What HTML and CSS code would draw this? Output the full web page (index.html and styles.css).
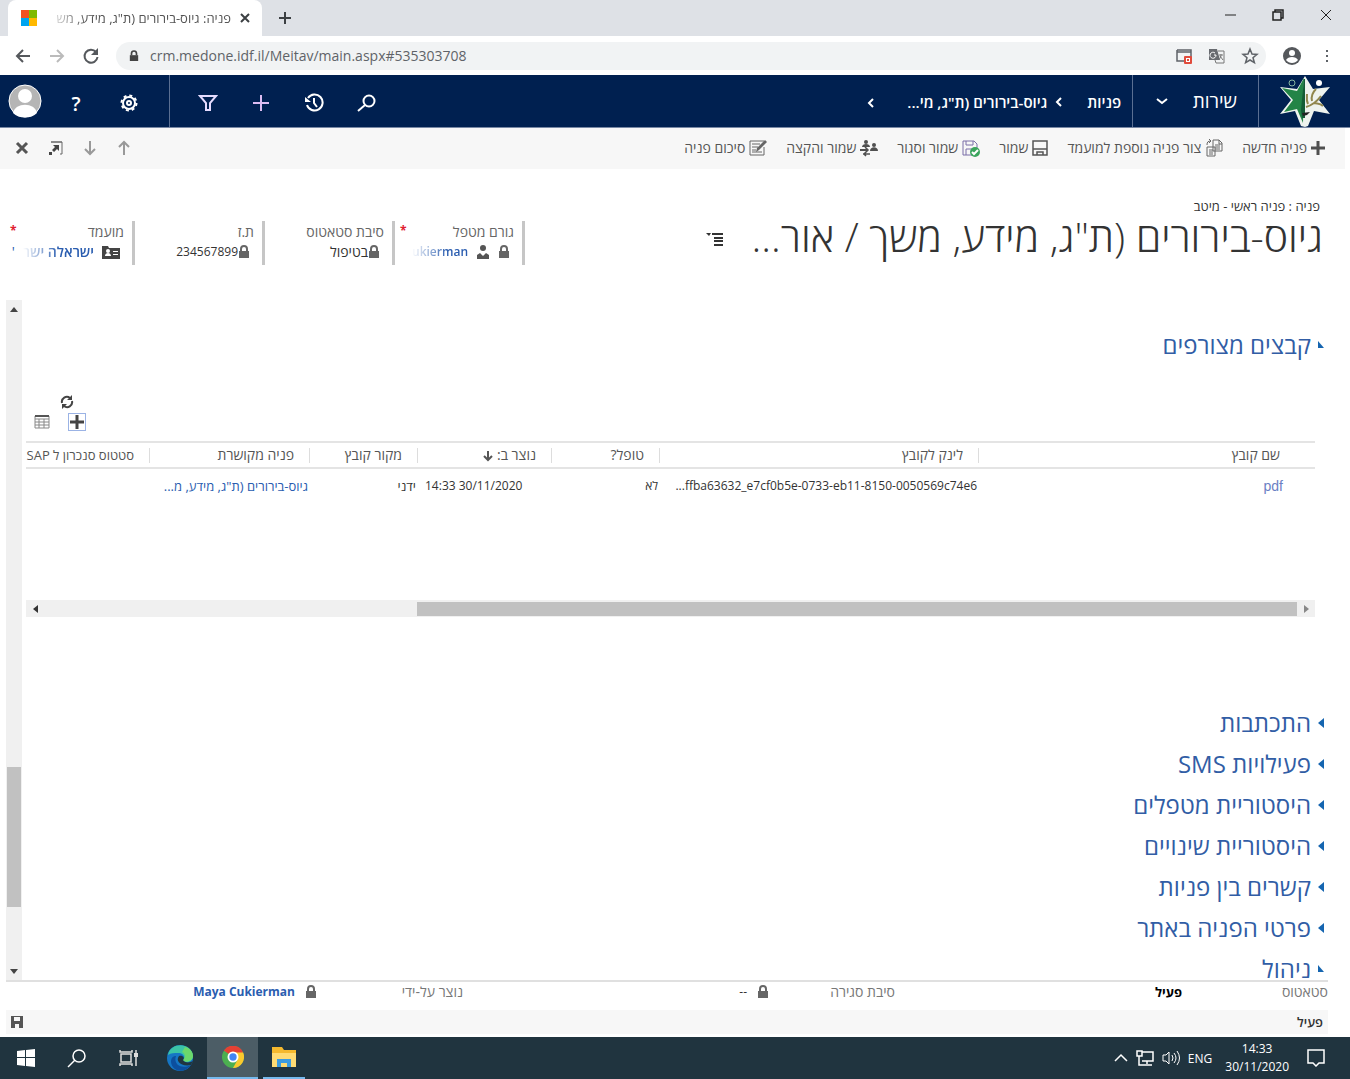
FILE: index.html
```html
<!DOCTYPE html>
<html lang="he">
<head>
<meta charset="utf-8">
<title>פניה: גיוס-בירורים</title>
<link rel="stylesheet" href="styles.css">
</head>
<body>
<svg class="defs" aria-hidden="true">
  <symbol id="lock" viewBox="0 0 12 14"><path d="M3 6V4a3 3 0 0 1 6 0v2" fill="none" stroke="currentColor" stroke-width="2"/><rect x="1" y="6" width="10" height="7" fill="currentColor"/></symbol>
  <symbol id="tri-left" viewBox="0 0 6 10"><path d="M6 0v10L0 5z" fill="currentColor"/></symbol>
  <symbol id="tri-open" viewBox="0 0 6 10"><path d="M0 1v7h6z" fill="currentColor"/></symbol>
  <symbol id="chev" viewBox="0 0 8 12"><path d="M6 2L2 6l4 4" fill="none" stroke="currentColor" stroke-width="2"/></symbol>
</svg>
<div class="window">
  <header class="tabstrip">
    <div class="tab">
      <svg class="i18" viewBox="0 0 18 18"><path fill="#f25022" d="M1 1h8v8H1z"/><path fill="#7fba00" d="M9 1h8v8H9z"/><path fill="#00a4ef" d="M1 9h8v8H1z"/><path fill="#ffb900" d="M9 9h8v8H9z"/></svg>
      <span class="tab-title" dir="rtl">פניה: גיוס-בירורים (ת"ג, מידע, מש</span>
      <button class="ib" aria-label="Close tab"><svg class="i12" viewBox="0 0 12 12"><path d="M2 2l8 8M10 2l-8 8" stroke="#3c4043" stroke-width="2"/></svg></button>
    </div>
    <button class="ib newtab" aria-label="New tab"><svg class="i14" viewBox="0 0 14 14"><path d="M7 1v12M1 7h12" stroke="#3c4043" stroke-width="2"/></svg></button>
    <div class="wincontrols">
      <button class="ib" aria-label="Minimize"><svg class="i14" viewBox="0 0 14 14"><path d="M2 7h11" stroke="#222"/></svg></button>
      <button class="ib" aria-label="Restore"><svg class="i14" viewBox="0 0 14 14"><path d="M2 4h8v8H2zM4 4V2h8v8h-2" fill="none" stroke="#222" stroke-width="1.500"/></svg></button>
      <button class="ib" aria-label="Close"><svg class="i14" viewBox="0 0 14 14"><path d="M2 2l10 10M12 2L2 12" stroke="#222"/></svg></button>
    </div>
  </header>
  <div class="toolbar">
    <button class="ib" aria-label="Back"><svg class="i18" viewBox="0 0 18 18"><path d="M16 9H3M9 3L3 9l6 6" fill="none" stroke="#55585c" stroke-width="2"/></svg></button>
    <button class="ib" aria-label="Forward"><svg class="i18" viewBox="0 0 18 18"><path d="M2 9h13M9 3l6 6-6 6" fill="none" stroke="#bbb" stroke-width="2"/></svg></button>
    <button class="ib" aria-label="Reload"><svg class="i18" viewBox="0 0 18 18"><path d="M14 5a6.500 6.500 0 1 0 1.500 5" fill="none" stroke="#55585c" stroke-width="2"/><path d="M16 1v7H9z" fill="#55585c"/></svg></button>
    <div class="omnibox">
      <svg class="lock-s" aria-hidden="true"><use href="#lock"/></svg>
      <input class="url" aria-label="Address" value="crm.medone.idf.il/Meitav/main.aspx#535303708">
      <button class="ib" aria-label="Popup blocked"><svg class="i18" viewBox="0 0 18 18"><path d="M2 3h14v9M9 14H2V3M2 5h14" fill="none" stroke="#5f6368" stroke-width="1.500"/><rect x="9" y="9" width="8" height="8" rx="1" fill="#e04b3c"/><path d="M11 11h4v4h-4z" fill="#fff"/><path d="M12 12h2v2h-2z" fill="#e04b3c"/></svg></button>
      <button class="ib" aria-label="Translate"><svg class="i18" viewBox="0 0 18 18"><path d="M1 2h8l3 11H1z" fill="#686b70"/><path d="M10 4h6v12H8l-1-3" fill="none" stroke="#777"/><path d="M7 6a3 3 0 1 0 1 2H6" fill="none" stroke="#fff"/><path d="M11 8h4M13 7v1c0 2-1 4-2 4M12 9l3 4" fill="none" stroke="#777"/></svg></button>
      <button class="ib" aria-label="Bookmark"><svg class="i18" viewBox="0 0 18 18"><path d="M9 2l2 5 5 .4-4 3.300 1.400 5L9 13l-4.400 2.700L6 10.700 2 7.400 7 7z" fill="none" stroke="#5f6368" stroke-width="1.500"/></svg></button>
    </div>
    <button class="ib" aria-label="Profile"><svg class="i20" viewBox="0 0 20 20"><circle cx="10" cy="10" r="9" fill="#55585c"/><circle cx="10" cy="7" r="3" fill="#fff"/><path d="M4 14c2-4 10-4 12 0-3 4-9 4-12 0z" fill="#fff"/></svg></button>
    <button class="ib" aria-label="Menu"><svg class="i18" viewBox="0 0 18 18"><path d="M8 3h2v2H8zM8 8h2v2H8zM8 13h2v2H8z" fill="#5f6368"/></svg></button>
  </div>

  <nav class="nav" dir="rtl">
    <a href="#" class="logo" aria-label="מיטב"><svg class="logo-svg" viewBox="0 0 52 52"><path d="M26 1l8 13 17-2-11 13 11 14-16-3-6 15-3 1-4-1-6-15-15 3L12 25 1 12l17 2z" fill="#eef3ee"/><path d="M25 3l-7 13-15-3 11 12-9 12 13-3 6 14z" fill="#238447"/><circle cx="13" cy="8" r="3" fill="none" stroke="#87b6a0"/><circle cx="40" cy="8" r="3" fill="#fff"/><path d="M26 4v39h-3l-1-8 3-31" fill="#145c36"/><path d="M27 32c7-2 12-7 15-11M29 29c-2-4-1-8-1-10M33 26c-1-4 1-9 4-12M35 28c4 1 6 0 9 3" fill="none" stroke="#90874d" stroke-width="2"/><path d="M23 38l8-1-3 3-4 1z" fill="#222"/></svg></a>
    <button class="area">שירות <svg class="i14" viewBox="0 0 14 14"><path d="M2 5l5 4 5-4" fill="none" stroke="#fff" stroke-width="2"/></svg></button>
    <a href="#" class="crumb">פניות</a>
    <a href="#" class="crumb rec"><svg class="chev" aria-hidden="true"><use href="#chev"/></svg>גיוס-בירורים (ת"ג, מי...</a>
    <button class="ib more" aria-label="עוד"><svg class="chev"><use href="#chev"/></svg></button>
    <div class="navtools" dir="ltr">
      <button class="ib avatar" aria-label="Account"><svg viewBox="0 0 34 34"><circle cx="17" cy="17" r="16" fill="#b5b5b5" stroke="#fff"/><path d="M5 29c2-11 22-11 24 0-6 6-18 6-24 0z" fill="#fff"/><circle cx="17" cy="12" r="7" fill="#fff"/></svg></button>
      <button class="ib help" aria-label="Help">?</button>
      <button class="ib gear" aria-label="Settings"><svg class="i20" viewBox="0 0 20 20"><circle cx="10" cy="10" r="6" fill="none" stroke="#fff" stroke-width="2"/><circle cx="10" cy="10" r="7.500" fill="none" stroke="#fff" stroke-width="2" stroke-dasharray="3 2.900"/><circle cx="10" cy="10" r="2" fill="none" stroke="#fff" stroke-width="2"/></svg></button>
      <button class="ib" aria-label="Filter"><svg class="i20" viewBox="0 0 20 20"><path d="M2 3h16l-6 7v7H8v-7z" fill="none" stroke="#e5dcff" stroke-width="2"/></svg></button>
      <button class="ib" aria-label="Create"><svg class="i20" viewBox="0 0 20 20"><path d="M10 2v16M2 10h16" stroke="#dcbcf2" stroke-width="2"/></svg></button>
      <button class="ib" aria-label="Recent"><svg class="i20" viewBox="0 0 20 20"><path d="M4 5a8 8 0 1 1-1 7M10 5v5l3 4" fill="none" stroke="#fff" stroke-width="2"/><path d="M1 4v5h6z" fill="#fff"/></svg></button>
      <button class="ib" aria-label="Search"><svg class="i20" viewBox="0 0 20 20"><circle cx="12" cy="8" r="5.500" fill="none" stroke="#fff" stroke-width="2"/><path d="M8 12l-7 6" stroke="#fff" stroke-width="2"/></svg></button>
    </div>
  </nav>

  <div class="commands" dir="rtl">
    <button class="cmd"><svg class="i14" viewBox="0 0 14 14"><path d="M7 0v14M0 7h14" stroke="#505050" stroke-width="3"/></svg>פניה חדשה</button>
    <button class="cmd"><svg class="i18" viewBox="0 0 18 18"><path d="M8 1h6l3 3v8H8zM14 1v4h3M10 6h5M10 8h5M10 10h5M2 8h8v9H2zM4 11h4M4 13h4M4 15h4M2 6c0-3 1-4 4-4M4 0l2 2-2 2" fill="none" stroke="#666"/></svg>צור פניה נוספת למועמד</button>
    <button class="cmd"><svg class="i16" viewBox="0 0 16 16"><path d="M1 1h14v14H1zM1 9h14M5 15v-3h6v3" fill="none" stroke="#555" stroke-width="1.500"/></svg>שמור</button>
    <button class="cmd"><svg class="i18" viewBox="0 0 18 18"><path d="M1 2h11l3 3v11H1zM4 2v4h7V2M4 16v-6h6" fill="none" stroke="#7b6fa8"/><circle cx="13" cy="13" r="5" fill="#3ba55d"/><path d="M10 13l2 2 4-4" fill="none" stroke="#fff" stroke-width="2"/></svg>שמור וסגור</button>
    <button class="cmd"><svg class="i18" viewBox="0 0 18 18"><g fill="#505050"><circle cx="6" cy="3" r="2"/><path d="M2 8c0-4 8-4 8 0z"/><circle cx="14" cy="6" r="2"/><path d="M10 12c0-5 8-5 8 0zM0 10h8v2H0z"/></g><path d="M5 8l3 3-3 3M10 15H3M6 13l-2 2 2 2" fill="none" stroke="#505050" stroke-width="1.500"/></svg>שמור והקצה</button>
    <button class="cmd"><svg class="i18" viewBox="0 0 18 18"><path d="M15 8v8H1V2h14M3 5h8M3 8h6M3 11h4M3 13h10" fill="none" stroke="#666"/><path d="M7 13l1-4 8-8 2 2-8 8z" fill="#666"/></svg>סיכום פניה</button>
    <div class="cmdtools" dir="ltr">
      <button class="ib" aria-label="Close form"><svg class="i16" viewBox="0 0 16 16"><path d="M3 3l10 10M13 3L3 13" stroke="#555" stroke-width="3"/></svg></button>
      <button class="ib" aria-label="Pop out"><svg class="i16" viewBox="0 0 16 16"><path d="M3 2h11v12h-2M14 2H3" fill="none" stroke="#666"/><path d="M5 5h6v6L9 9l-3 3-2-2 3-3zM1 12h3v3H1z" fill="#444"/></svg></button>
      <button class="ib" aria-label="Next record"><svg class="i16" viewBox="0 0 16 16"><path d="M8 1v12M3 9l5 5 5-5" fill="none" stroke="#999" stroke-width="2"/></svg></button>
      <button class="ib" aria-label="Previous record"><svg class="i16" viewBox="0 0 16 16"><path d="M8 15V3M3 7l5-5 5 5" fill="none" stroke="#999" stroke-width="2"/></svg></button>
    </div>
  </div>

  <section class="formhead" dir="rtl">
    <div class="titles">
      <p class="formname">פניה : פניה ראשי - מיטב</p>
      <div class="titlerow">
        <h1>גיוס-בירורים (ת"ג, מידע, משך / אור...</h1>
        <button class="ib formpick" aria-label="בחר טופס"><svg class="i18" viewBox="0 0 18 18"><path d="M6 4h11M8 8h9M8 11h9M8 15h9" stroke="#333" stroke-width="2"/><path d="M0 3h5L3 6z" fill="#333"/></svg></button>
      </div>
    </div>
    <dl class="fields">
      <div class="field req"><dt>גורם מטפל</dt><dd><svg class="lock"><use href="#lock"/></svg><svg class="i14" viewBox="0 0 14 14"><circle cx="7" cy="3" r="3" fill="#555"/><path d="M1 14V10l3-2 3 3 3-3 3 2v4z" fill="#555"/></svg><a href="#" class="fade">ukierman</a></dd></div>
      <div class="field"><dt>סיבת סטאטוס</dt><dd class="tight heb"><svg class="lock"><use href="#lock"/></svg>בטיפול</dd></div>
      <div class="field"><dt>ת.ז</dt><dd class="tight"><svg class="lock"><use href="#lock"/></svg>234567899</dd></div>
      <div class="field req"><dt>מועמד</dt><dd class="heb"><svg class="card" viewBox="0 0 18 14"><path d="M0 1h6l1 2h11v11H0z" fill="#444"/><circle cx="6" cy="6" r="2" fill="#fff"/><path d="M3 11c0-4 6-4 6 0zM11 6h5v1h-5zM11 9h5v1h-5z" fill="#fff"/></svg><a href="#" class="fade">ישראלה ישר</a><span class="cut">'</span></dd></div>
    </dl>
  </section>

  <main class="scroller" dir="ltr">
    <div class="vbar"><span class="up"></span><span class="vthumb"></span><span class="down"></span></div>
    <div class="content" dir="rtl">
      <h2 class="sec"><svg class="tri"><use href="#tri-open"/></svg>קבצים מצורפים</h2>
      <div class="gridbox">
        <div class="gridtools" dir="ltr">
          <button class="ib refresh" aria-label="Refresh"><svg class="i14" viewBox="0 0 14 14"><path d="M2 8a5 5 0 0 1 8-5M12 6a5 5 0 0 1-8 5" fill="none" stroke="#444" stroke-width="2"/><path d="M12 0v5H7zM2 14V9h5z" fill="#444"/></svg></button>
          <div class="toolrow">
            <button class="ib" aria-label="Open grid"><svg class="i16" viewBox="0 0 16 16"><path d="M1 2h14v12H1zM1 5h14M1 8h14M1 11h14M5 5v9M10 5v9" fill="none" stroke="#888"/><path d="M1 2h14" stroke="#555" stroke-width="2"/></svg></button>
            <button class="ib add" aria-label="Add"><svg class="i14" viewBox="0 0 14 14"><path d="M7 0v14M0 7h14" stroke="#444" stroke-width="3"/></svg></button>
          </div>
        </div>
        <table class="grid">
          <colgroup><col><col class="c-link"><col class="c-dup"><col class="c-date"><col class="c-src"><col class="c-rel"><col class="c-sap"></colgroup>
          <thead><tr><th class="name">שם קובץ</th><th>לינק לקובץ</th><th>טופל?</th><th>נוצר ב: <svg class="sort" viewBox="0 0 10 12"><path d="M5 1v9M1 6l4 4 4-4" fill="none" stroke="#555" stroke-width="2"/></svg></th><th>מקור קובץ</th><th>פניה מקושרת</th><th class="sap">סטטוס סנכרון ל SAP</th></tr></thead>
          <tbody><tr><td class="name"><a href="#">pdf</a></td><td><bdi dir="ltr">...ffba63632_e7cf0b5e-0733-eb11-8150-0050569c74e6</bdi></td><td>לא</td><td class="date"><bdi dir="ltr">14:33 30/11/2020</bdi></td><td class="rel">ידני</td><td class="rel"><a href="#">גיוס-בירורים (ת"ג, מידע, מ...</a></td><td></td></tr></tbody>
        </table>
        <div class="hbar" dir="ltr"><span class="left"></span><span class="hthumb"></span><span class="right"></span></div>
      </div>
      <div class="sections">
        <h2 class="sec"><svg class="tri"><use href="#tri-left"/></svg>התכתבות</h2>
        <h2 class="sec"><svg class="tri"><use href="#tri-left"/></svg>פעילויות SMS</h2>
        <h2 class="sec"><svg class="tri"><use href="#tri-left"/></svg>היסטוריית מטפלים</h2>
        <h2 class="sec"><svg class="tri"><use href="#tri-left"/></svg>היסטוריית שינויים</h2>
        <h2 class="sec"><svg class="tri"><use href="#tri-left"/></svg>קשרים בין פניות</h2>
        <h2 class="sec"><svg class="tri"><use href="#tri-left"/></svg>פרטי הפניה באתר</h2>
        <h2 class="sec"><svg class="tri"><use href="#tri-open"/></svg>ניהול</h2>
      </div>
    </div>
  </main>

  <dl class="formfoot" dir="rtl">
    <div><dt>סטאטוס</dt><dd class="strong">פעיל</dd></div>
    <div class="closing"><dt>סיבת סגירה</dt><dd><svg class="lock"><use href="#lock"/></svg>--</dd></div>
    <div><dt>נוצר על-ידי</dt><dd><svg class="lock"><use href="#lock"/></svg><a href="#">Maya Cukierman</a></dd></div>
  </dl>
  <div class="status" dir="rtl"><span>פעיל</span><button class="ib" aria-label="שמור"><svg class="i12" viewBox="0 0 12 12"><path d="M0 0h12v12H0z" fill="#555"/><path d="M3 1h6v4H3zM4 8h4v4H4z" fill="#f7f7f7"/></svg></button></div>

  <footer class="taskbar">
    <button class="task" aria-label="Start"><svg class="i18" viewBox="0 0 18 18"><path d="M0 2l8-1v7H0zM9 1l9-1v8H9zM0 9h8v8l-8-1zM9 9h9v9l-9-1z" fill="#fff"/></svg></button>
    <button class="task" aria-label="Search"><svg class="i20" viewBox="0 0 20 20"><circle cx="12" cy="8" r="6" fill="none" stroke="#fff" stroke-width="1.500"/><path d="M8 12l-7 7" stroke="#fff" stroke-width="1.500"/></svg></button>
    <button class="task" aria-label="Task view"><svg class="i20" viewBox="0 0 20 20"><path d="M3 6h10v8H3zM2 2v2h12V2M2 18v-2h12v2M18 2v16" fill="none" stroke="#ddd" stroke-width="1.500"/><path d="M16 5h4v4h-4z" fill="#ddd"/></svg></button>
    <button class="task wide" aria-label="Edge"><svg class="i26" viewBox="0 0 26 26"><circle cx="13" cy="13" r="13" fill="#1576c4"/><path d="M1 10C3-3 25-3 26 11c0 6-8 8-10 4 3-3 0-7-5-7-4 0-7 0-10 2z" fill="#3bc4a6"/><path d="M18 2c5 1 8 5 8 9 0 6-8 7-10 4 4-4 1-7-1-8z" fill="#6bd86c"/><path d="M9 11c-3 8 5 14 15 9-6 9-19 7-20-3 0-4 2-6 5-6z" fill="#0c4f9e"/><path d="M12 11c-4 5 2 11 12 9l2-4c-3 2-9 2-10-1 2-2 0-5-4-4z" fill="#203640"/></svg></button>
    <button class="task active" aria-label="Chrome"><svg class="i22" viewBox="0 0 24 24"><circle cx="12" cy="12" r="12" fill="#4caf50"/><path d="M12 12L2 5a12 12 0 0 1 21 2z" fill="#e44134"/><path d="M12 7h11a12 12 0 0 1-11 17l5-9z" fill="#fbc92d"/><circle cx="12" cy="12" r="6" fill="#fff"/><circle cx="12" cy="12" r="4" fill="#4285f4"/></svg></button>
    <button class="task running" aria-label="Files"><svg class="i24" viewBox="0 0 24 22"><path d="M0 1h10l2 3h12v17H0z" fill="#f5b92e"/><path d="M0 7h24v14H0z" fill="#ffdb73"/><path d="M5 21v-8h14v8h-4v-4H9v4z" fill="#3c9be0"/></svg></button>
    <div class="tray">
      <button class="ib" aria-label="Hidden icons"><svg class="i14" viewBox="0 0 14 14"><path d="M1 10l6-6 6 6" fill="none" stroke="#fff" stroke-width="1.500"/></svg></button>
      <button class="ib" aria-label="Network"><svg class="i18" viewBox="0 0 18 18"><path d="M6 3h11v9H6M11 12v3M6 16h10M1 2h5v5H1zM3 7v9h4" fill="none" stroke="#fff" stroke-width="1.500"/></svg></button>
      <button class="ib" aria-label="Volume"><svg class="i18" viewBox="0 0 18 18"><path d="M1 6h3l3-3v12l-3-3H1zM10 6q2 3 0 6M12 4q4 5 0 10M15 2q5 7 0 14" fill="none" stroke="#fff"/></svg></button>
      <span class="lang">ENG</span>
      <div class="clock"><span>14:33</span><span>30/11/2020</span></div>
      <button class="ib" aria-label="Notifications"><svg class="i18" viewBox="0 0 18 18"><path d="M1 1h16v13h-5l-3 3-3-3H1z" fill="none" stroke="#fff" stroke-width="1.500"/></svg></button>
    </div>
  </footer>
</div>
</body>
</html>
```
FILE: styles.css
```css
* { box-sizing: border-box; }
body { margin: 0; font-family: "Open Sans", "Noto Sans", sans-serif; font-size: 12px; color: #333; background: #fff; }
button { font: inherit; color: inherit; background: none; border: 0; padding: 0; }
a { color: #2a5db0; text-decoration: none; }
h1, h2, p, dl, dd, dt { margin: 0; font-weight: 400; }
svg { flex: none; display: block; }
.defs { position: absolute; width: 0; height: 0; }
.ib { display: flex; align-items: center; justify-content: center; flex: none; }
.heb { font-size: 14px; }
.i12 { width: 12px; height: 12px; }
.i14 { width: 14px; height: 14px; }
.i16 { width: 16px; height: 16px; }
.i18 { width: 18px; height: 18px; }
.i20 { width: 20px; height: 20px; }
.i22 { width: 22px; height: 22px; }
.i24 { width: 24px; height: 22px; }
.i26 { width: 26px; height: 26px; }
.lock { width: 12px; height: 14px; color: #666; }
.lock-s { width: 10px; height: 12px; color: #444; }
.window { display: flex; flex-direction: column; height: 100vh; min-height: 800px; }

.tabstrip { display: flex; align-items: center; height: 36px; background: #dee1e6; padding-left: 8px; }
.tab { display: flex; align-items: center; align-self: stretch; gap: 8px; width: 254px; padding: 0 11px 0 12px; background: #fff; border-radius: 8px 8px 0 0; }
.tab-title { flex: 1; overflow: hidden; white-space: nowrap; font-size: 13px; color: #555; mask-image: linear-gradient(to right, transparent, #000 40px); }
.newtab { margin-left: 16px; }
.wincontrols { display: flex; gap: 34px; margin-left: auto; padding: 0 17px 6px 0; }

.toolbar { display: flex; align-items: center; height: 39px; gap: 16px; padding: 0 14px; background: #fff; }
.omnibox { flex: 1; display: flex; align-items: center; gap: 15px; height: 28px; padding: 0 7px 0 13px; border-radius: 14px; background: #f1f3f4; }
.omnibox .url { flex: 1; margin-left: -4px; border: 0; padding: 0; background: none; font: inherit; font-size: 14px; color: #5f6368; }

.nav { display: flex; align-items: stretch; height: 53px; background: #002050; color: #fff; border-bottom: 1px solid #7888a4; }
.logo { display: flex; align-items: center; justify-content: center; width: 92px; border-left: 1px solid #5a6f92; }
.logo-svg { width: 52px; height: 52px; }
.area { display: flex; align-items: center; justify-content: space-between; width: 126px; padding: 0 21px 0 22px; border-left: 1px solid #5a6f92; font-size: 19px; }
.crumb { display: flex; align-items: center; color: #fff; font-size: 15px; padding: 1px 11px 0 0; white-space: nowrap; font-weight: 600; }
.crumb.rec { gap: 8px; padding-right: 24px; }
.chev { width: 8px; height: 12px; }
.more { margin-right: 32px; padding-top: 3px; }
.navtools { display: flex; align-items: center; margin-right: auto; }
.navtools .ib { width: 53px; align-self: stretch; padding-top: 4px; }
.navtools .avatar { padding: 0 2px 0 0; width: 52px; }
.avatar svg { width: 34px; height: 34px; }
.navtools .help { font-size: 20px; font-weight: 600; width: 48px; }
.navtools .gear { width: 70px; padding-right: 12px; border-right: 1px solid #5a6f92; margin-right: 11px; }

.commands { display: flex; align-items: center; height: 41px; padding: 0 20px 2px 14px; margin-right: 5px; gap: 19px; background: #f7f7f7; color: #555; }
.cmd { display: flex; align-items: center; gap: 4px; white-space: nowrap; font-size: 14px; }
.cmdtools { display: flex; gap: 18px; margin-right: auto; }

.formhead { display: flex; justify-content: space-between; height: 131px; padding: 28px 27px 0 5px; }
.formname { line-height: 18px; padding-right: 3px; font-size: 13px; }
.titlerow { display: flex; align-items: center; gap: 28px; }
.formpick { padding-top: 6px; }
h1 { font-size: 41px; font-weight: 300; line-height: 42px; white-space: nowrap; }
.fields { display: flex; padding-top: 24px; }
.field { position: relative; width: 130px; height: 44px; border-right: 3px solid #c6c6c6; padding: 1px 8px 0 0; line-height: 20px; white-space: nowrap; }
.field dt { color: #666; font-size: 14px; }
.field dd { display: flex; align-items: center; gap: 8px; padding-right: 4px; }
.field dd.tight { gap: 0; }
.field .fade { font-weight: 600; mask-image: linear-gradient(to right, transparent, #000 36px); }
.card { width: 18px; height: 14px; }
.cut { color: #2a5db0; }
.req::after { content: "*"; position: absolute; left: 5px; top: 0; color: #e02030; font-weight: 700; }

.scroller { flex: 1; min-height: 0; display: flex; overflow: hidden; }
.vbar { display: grid; grid-template-rows: 18px 449px 140px 1fr 18px; width: 16px; margin-left: 6px; background: #f0f0f0; justify-items: center; align-items: center; }
.vthumb { grid-row: 3; width: 14px; height: 140px; background: #c1c1c1; }
.up, .down { border: 4px solid transparent; }
.up { border-bottom: 5px solid #444; border-top: 0; }
.down { grid-row: 5; border-top: 5px solid #444; border-bottom: 0; }
.content { flex: 1; min-width: 0; padding: 24px 26px 0 4px; }
.sec { display: flex; align-items: center; gap: 7px; height: 41px; color: #315da5; font-size: 24px; }
.tri { width: 6px; height: 10px; color: #1565b0; }
.gridbox { margin-right: 9px; padding-top: 29px; }
.gridtools { height: 47px; padding-left: 8px; }
.refresh { margin-left: 26px; height: 16px; }
.toolrow { display: flex; align-items: center; gap: 18px; height: 24px; }
.add { width: 18px; height: 18px; border: 1px solid #9bb3e5; }
.grid { width: 100%; table-layout: fixed; border-collapse: collapse; }
.c-link { width: 319px; }
.c-dup, .c-src { width: 108px; }
.c-date { width: 134px; }
.c-rel { width: 160px; }
.c-sap { width: 124px; }
.grid th { height: 26px; padding: 0 16px 0 0; border-top: 2px solid #e4e4e4; border-bottom: 2px solid #e4e4e4; font-size: 14px; line-height: 20px; font-weight: 400; color: #555; text-align: right; white-space: nowrap; background: linear-gradient(#ddd, #ddd) right 5px / 1px 15px no-repeat; }
.grid th.name { background: none; padding-right: 35px; }
.grid th.sap { overflow: hidden; font-size: 13px; }
.sort { display: inline-block; width: 10px; height: 12px; vertical-align: middle; }
.grid td { height: 34px; padding: 0 2px 0 0; white-space: nowrap; overflow: hidden; line-height: 20px; }
.grid td.name { padding-right: 32px; font-family: "Liberation Sans", sans-serif; font-size: 14px; }
.grid td.rel { font-size: 13px; }
.name a { color: #6b80c4; }
.grid td.date { text-align: left; padding-left: 7px; }
.hbar { display: grid; grid-template-columns: 18px minmax(0, 373fr) 881fr 18px; align-items: center; justify-items: center; height: 17px; margin-top: 98px; background: #f0f0f0; }
.hthumb { grid-column: 3; width: 100%; height: 14px; background: #c1c1c1; }
.left, .right { border: 4px solid transparent; }
.left { border-right: 5px solid #333; border-left: 0; }
.right { border-left: 5px solid #888; border-right: 0; }
.sections { padding-top: 85px; }

.formfoot { display: grid; grid-template-columns: 433px 1fr 457px; height: 30px; border-top: 2px solid #e0e0e0; margin: 0 22px 0 6px; }
.formfoot > div { display: grid; grid-template-columns: 146px 1fr; align-items: start; line-height: 20px; }
.formfoot > .closing { grid-template-columns: 126px 1fr; }
.formfoot dt { color: #777; font-size: 14px; }
.formfoot dd { display: flex; align-items: center; gap: 10px; }
.formfoot a, .formfoot .strong { font-weight: 700; }
.formfoot .strong { color: #000; font-size: 13px; }
.status { display: flex; align-items: center; justify-content: space-between; height: 24px; margin: 0 22px 3px 6px; padding: 0 5px; background: #f7f7f7; font-size: 13px; font-weight: 600; }

.taskbar { display: flex; height: 42px; background: #20343f; color: #fff; }
.task { display: flex; align-items: center; justify-content: center; width: 51px; }
.task.wide { width: 54px; }
.task.active { background: #4c5d66; border-bottom: 2px solid #76b9ed; }
.task.running { border-bottom: 2px solid #76b9ed; margin-left: 5px; width: 42px; }
.tray { display: flex; align-items: center; gap: 8px; margin-left: auto; padding-right: 25px; }
.clock { display: flex; flex-direction: column; align-items: center; line-height: 18px; margin: 0 10px 0 5px; }
```
